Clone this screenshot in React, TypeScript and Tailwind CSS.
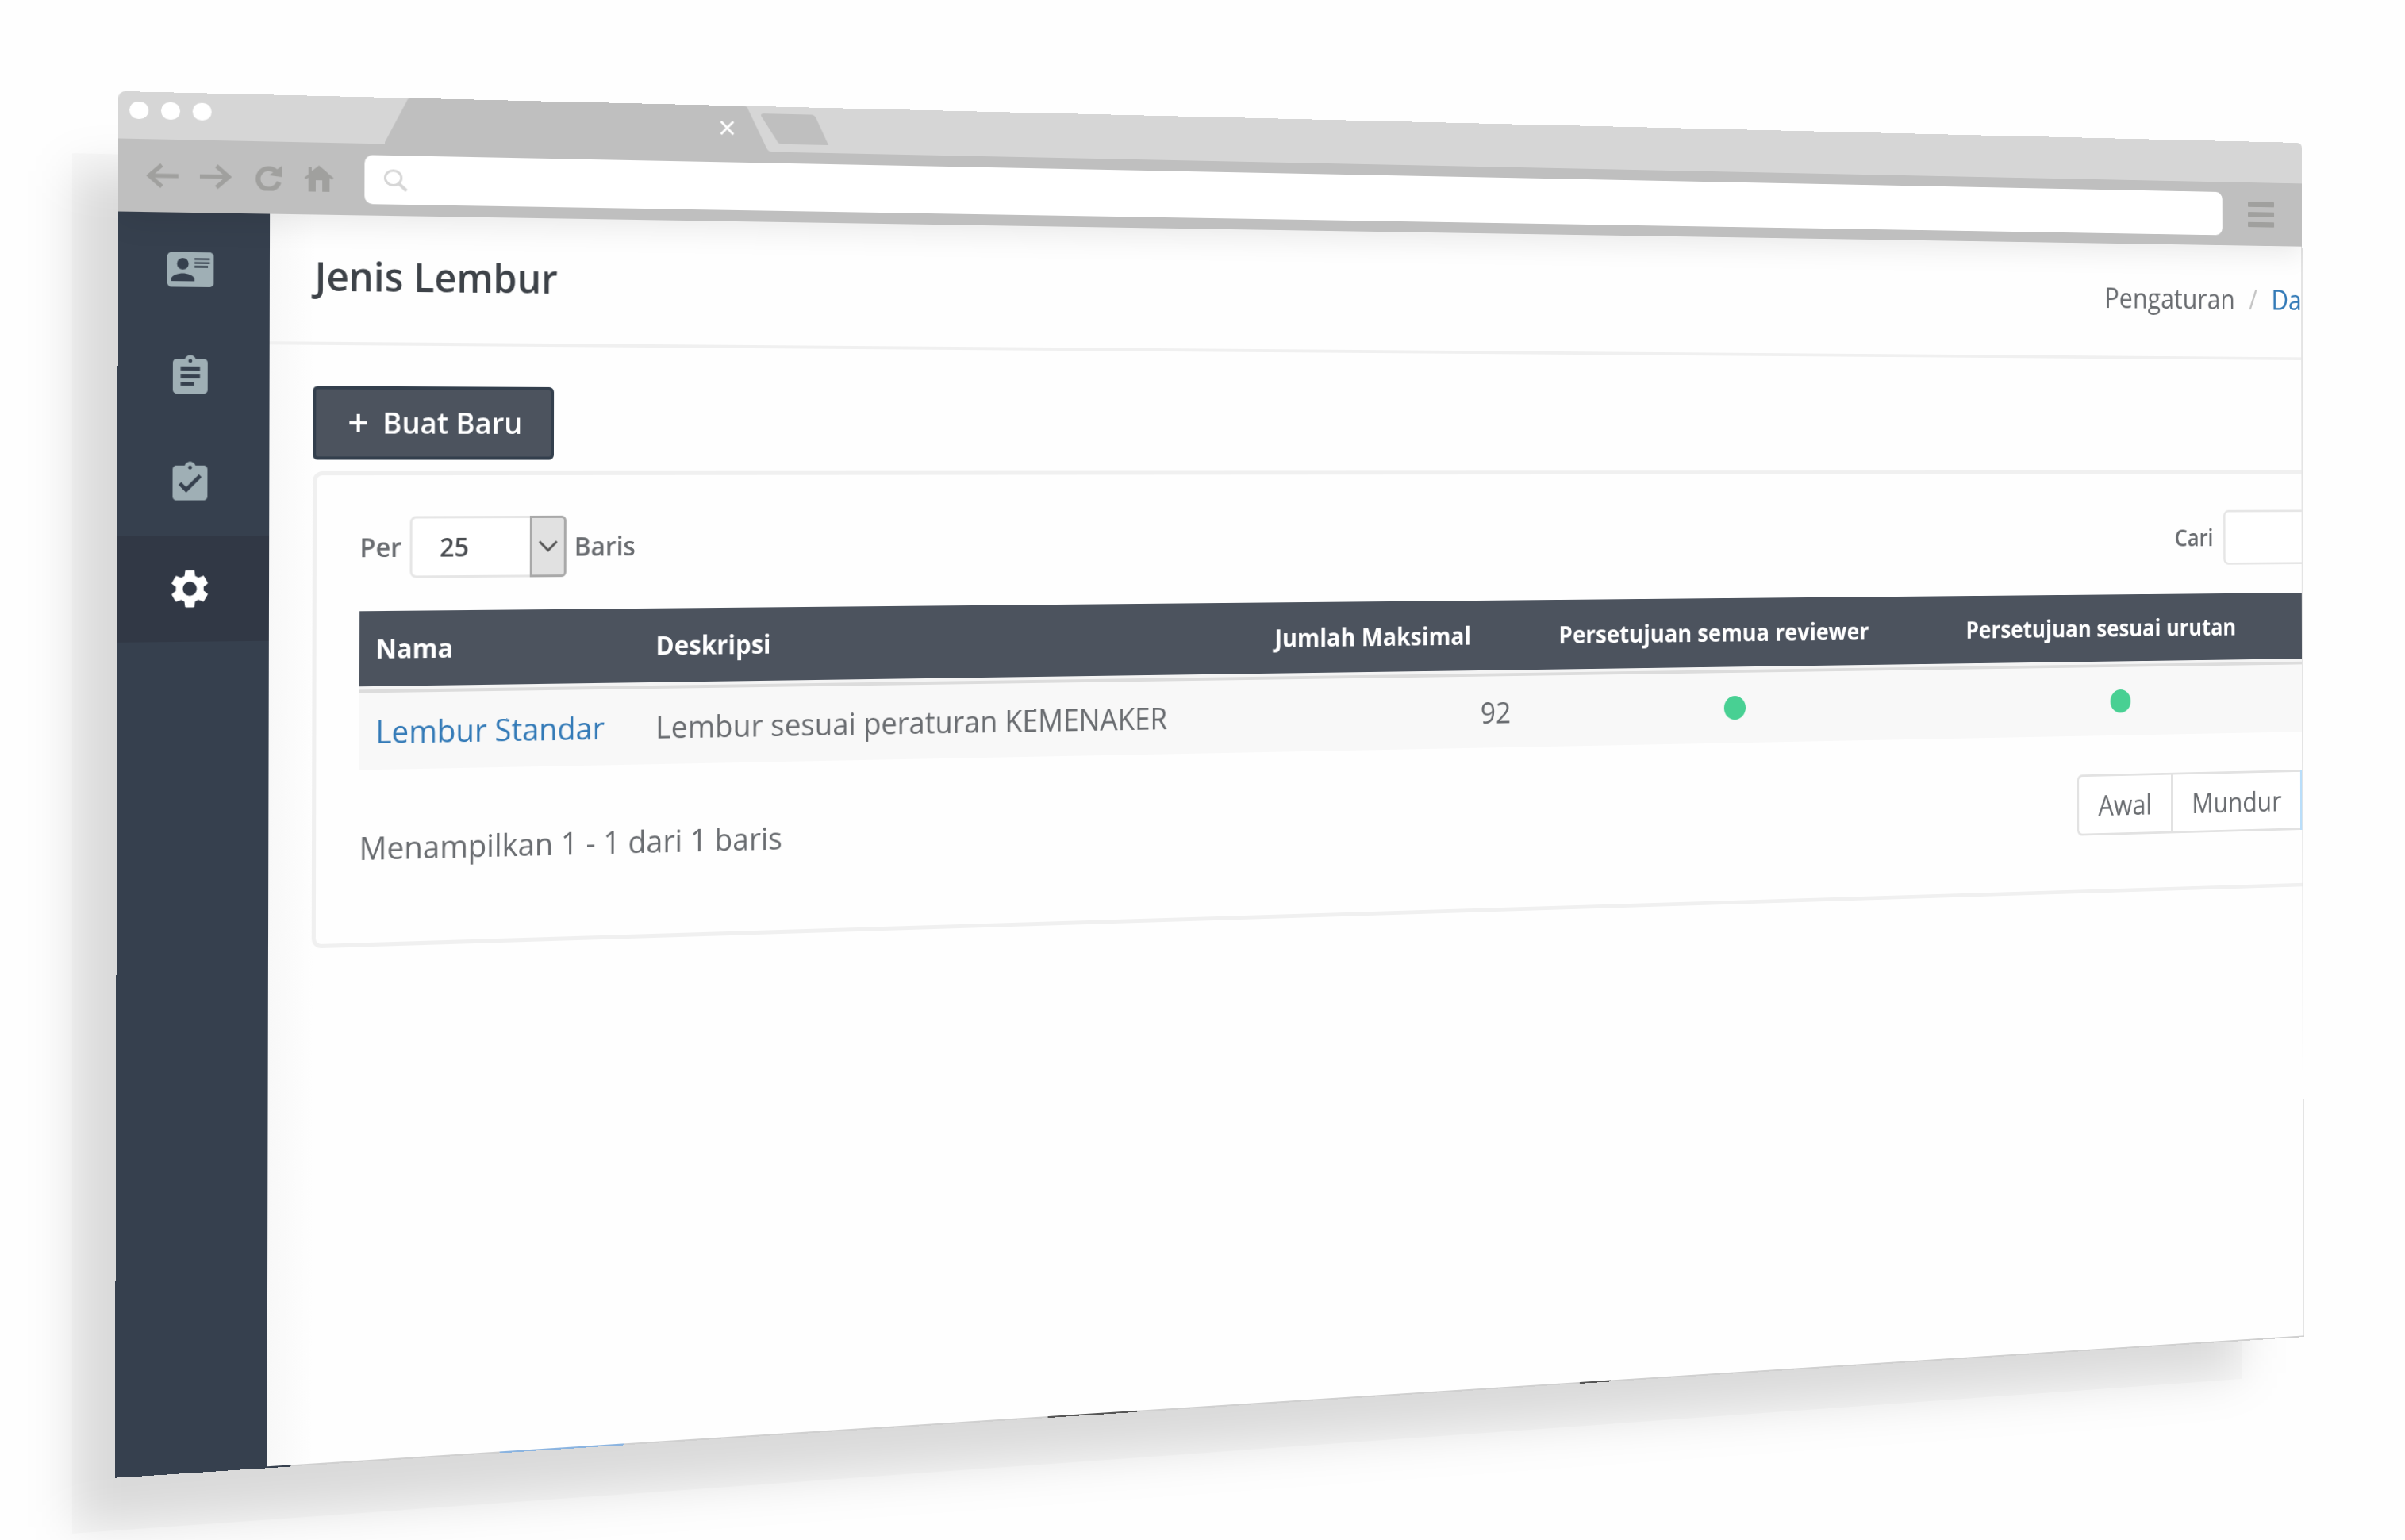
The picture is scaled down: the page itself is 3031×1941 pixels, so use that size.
import { useLayoutEffect, useRef, useState } from "react";
import type { ReactNode } from "react";
import { MdAssignment, MdAssignmentTurnedIn, MdSettings } from "react-icons/md";

type Point = [number, number];

// Corners of the tilted window, as fractions of the scene's width.
const CORNERS: Point[] = [
  [0.0493, 0.0379],
  [0.957, 0.0594],
  [0.958, 0.5559],
  [0.0478, 0.6146],
];

function projection(width: number, height: number): string {
  const [[x0, y0], [x1, y1], [x2, y2], [x3, y3]] = CORNERS.map(
    ([x, y]) => [x * width, y * width] as Point,
  );
  const dx1 = x1 - x2;
  const dx2 = x3 - x2;
  const dy1 = y1 - y2;
  const dy2 = y3 - y2;
  const sx = x0 - x1 + x2 - x3;
  const sy = y0 - y1 + y2 - y3;
  const det = dx1 * dy2 - dx2 * dy1;
  const g = (sx * dy2 - dx2 * sy) / det;
  const h = (dx1 * sy - sx * dy1) / det;
  const a = (x1 - x0 + g * x1) / width;
  const b = (x3 - x0 + h * x3) / height;
  const d = (y1 - y0 + g * y1) / width;
  const e = (y3 - y0 + h * y3) / height;
  const m = [a, d, 0, g / width, b, e, 0, h / height, 0, 0, 1, 0, x0, y0, 0, 1];
  return `matrix3d(${m.map((n) => n.toFixed(10)).join(",")})`;
}

function Tilted({ children }: { children: ReactNode }) {
  const ref = useRef<HTMLDivElement>(null);
  const [transform, setTransform] = useState("none");

  useLayoutEffect(() => {
    const el = ref.current;
    if (!el) return;
    const update = () => setTransform(projection(el.offsetWidth, el.offsetHeight));
    update();
    const observer = new ResizeObserver(update);
    observer.observe(el);
    return () => observer.disconnect();
  }, []);

  return (
    <div
      ref={ref}
      className="relative flex aspect-[20/11] w-full origin-top-left flex-col overflow-hidden rounded-t-lg bg-white"
      style={{ transform }}
    >
      {children}
    </div>
  );
}

function Shadow() {
  return (
    <svg className="absolute inset-x-0 top-0 w-full" viewBox="0 0 3031 1941" aria-hidden="true">
      <defs>
        <filter id="soft" x="-10%" y="-10%" width="120%" height="120%">
          <feGaussianBlur stdDeviation="30" />
        </filter>
      </defs>
      <polygon points="94,215 2822,260 2822,1730 94,1926" fill="#000" fillOpacity="0.125" filter="url(#soft)" />
      <polygon points="91,193 2826,260 2826,1738 91,1933" fill="#000" fillOpacity="0.02" />
    </svg>
  );
}

function TabStrip() {
  return (
    <div className="relative z-20 h-[57px] bg-[#d6d6d6]">
      <div className="flex h-full">
        <div className="flex w-[324px] gap-[15px] pt-3 pl-[13px]">
          <span className="h-[21px] w-[23px] rounded-full bg-white" />
          <span className="h-[21px] w-[23px] rounded-full bg-white" />
          <span className="h-[21px] w-[23px] rounded-full bg-white" />
        </div>
        <svg className="h-[57px] w-[570px]" viewBox="0 0 570 57" aria-hidden="true">
          <path d="M-6 57 Q0 57 2 51 L27 4 Q28 0 32 0 H454 Q459 0 460 4 L484 52 Q486 57 492 57 Z" fill="#bfbfbf" />
          <path d="M481 9 H542 Q547 9 549 14 L565 47 H504 Q499 47 497 42 L477 12 Q476 9 481 9 Z" fill="#bfbfbf" />
          <path d="M425 20 L441 36 M441 20 L425 36" stroke="#fff" strokeWidth="3" />
        </svg>
      </div>
    </div>
  );
}

function Toolbar() {
  return (
    <div className="relative z-10 flex h-[88px] items-center bg-[#bfbfbf] pl-[33px] text-[#a0a09e] shadow-[0_8px_40px_rgba(0,0,0,0.09)]">
      <div className="flex w-[266px] items-center gap-[26px]">
        <button type="button" aria-label="Back">
          <svg className="h-[30px] w-[39px]" viewBox="0 0 39 30" fill="none" stroke="currentColor" strokeWidth="5">
            <path d="M39 15 H4 M19 2 L4 15 L19 28" />
          </svg>
        </button>
        <button type="button" aria-label="Forward">
          <svg className="h-[30px] w-[39px]" viewBox="0 0 39 30" fill="none" stroke="currentColor" strokeWidth="5">
            <path d="M0 15 H35 M20 2 L35 15 L20 28" />
          </svg>
        </button>
        <button type="button" aria-label="Reload">
          <svg className="h-[31px] w-[36px]" viewBox="0 0 36 31">
            <path d="M27 7 A13 12.5 0 1 0 31 20" fill="none" stroke="currentColor" strokeWidth="6" />
            <path d="M35 0 V14 L19 12 Z" fill="currentColor" />
          </svg>
        </button>
        <button type="button" aria-label="Home">
          <svg className="h-[32px] w-[36px]" viewBox="0 0 36 32" fill="currentColor">
            <path d="M18 0 L36 15 L34 17 L31 15 V32 H22 V18 H14 V32 H5 V15 L2 17 L0 15 L5 11 V2 H9 V7 Z" />
          </svg>
        </button>
      </div>
      <label className="flex h-[60px] flex-1 items-center gap-4 rounded-[10px] bg-white pl-6">
        <svg className="h-[27px] w-[30px] text-[#d6d6d6]" viewBox="0 0 30 27" fill="none" stroke="currentColor" strokeWidth="3">
          <ellipse cx="11.500" cy="10.500" rx="10" ry="9" />
          <path d="M18 17 L28 26" strokeWidth="4" />
        </svg>
        <input type="text" aria-label="Address" className="h-full flex-1 outline-none" />
      </label>
      <button type="button" aria-label="Menu" className="mr-[45px] ml-[41px] flex w-[42px] flex-col gap-[7px]">
        <span className="h-[7px] w-full rounded-[1px] bg-[#a0a09e]" />
        <span className="h-[7px] w-full rounded-[1px] bg-[#a0a09e]" />
        <span className="h-[7px] w-full rounded-[1px] bg-[#a0a09e]" />
      </button>
    </div>
  );
}

function CardIcon() {
  return (
    <svg className="size-14" viewBox="0 0 24 24" fill="currentColor">
      <path d="M2,3H22C23.05,3 24,3.95 24,5V19C24,20.05 23.05,21 22,21H2C0.95,21 0,20.05 0,19V5C0,3.95 0.95,3 2,3M14,6V7H22V6H14M14,8V9H21.5L22,9V8H14M14,10V11H21V10H14M8,13.91C6,13.91 2,15 2,17V18H14V17C14,15 10,13.91 8,13.91M8,6A3,3 0 0,0 5,9A3,3 0 0,0 8,12A3,3 0 0,0 11,9A3,3 0 0,0 8,6Z" />
    </svg>
  );
}

const ITEM = "flex h-[129px] w-full items-center justify-center pr-2.5";

function Sidebar() {
  return (
    <nav className="flex w-[183px] shrink-0 flex-col bg-[#36404e] pt-1 text-[#9fafb5]">
      <a href="#karyawan" aria-label="Karyawan" className={ITEM}>
        <CardIcon />
      </a>
      <a href="#laporan" aria-label="Laporan" className={ITEM}>
        <MdAssignment className="size-14" />
      </a>
      <a href="#persetujuan" aria-label="Persetujuan" className={ITEM}>
        <MdAssignmentTurnedIn className="size-14" />
      </a>
      <a href="#pengaturan" aria-label="Pengaturan" className="flex h-32 w-full items-center justify-center bg-[#313845] pr-2.5 text-white">
        <MdSettings className="size-14" />
      </a>
    </nav>
  );
}

function OvertimeTable() {
  return (
    <table className="mt-10 w-[2784px] table-fixed border-separate border-spacing-0 text-left">
      <colgroup>
        <col className="w-[352px]" />
        <col className="w-[825px]" />
        <col className="w-[375px]" />
        <col className="w-[614px]" />
        <col className="w-[562px]" />
        <col />
      </colgroup>
      <thead>
        <tr className="h-24 bg-[#4c535e] text-[32px] whitespace-nowrap text-white [&>th]:border-b-4 [&>th]:border-[#f4f4f4]">
          <th className="px-5 font-bold">Nama</th>
          <th className="px-5 font-bold">Deskripsi</th>
          <th className="pr-[77px] text-right font-bold">Jumlah Maksimal</th>
          <th className="pr-[77px] pl-5 text-center font-bold">Persetujuan semua reviewer</th>
          <th className="pr-[77px] pl-5 text-center font-bold">Persetujuan sesuai urutan</th>
          <th />
        </tr>
      </thead>
      <tbody>
        <tr className="h-[98px] bg-[#f8f8f8] text-[38px] [&>td]:border-t-4 [&>td]:border-[#dcdcdc]">
          <td className="px-5">
            <a href="#lembur-standar" className="text-[#337ab7]">
              Lembur Standar
            </a>
          </td>
          <td className="px-5">Lembur sesuai peraturan KEMENAKER</td>
          <td className="px-5 text-right">92</td>
          <td>
            <span role="img" aria-label="Ya" className="mx-auto block size-8 rounded-full bg-[#48d093]" />
          </td>
          <td>
            <span role="img" aria-label="Ya" className="mx-auto block size-8 rounded-full bg-[#48d093]" />
          </td>
          <td />
        </tr>
      </tbody>
    </table>
  );
}

function Page() {
  return (
    <main className="min-w-0 flex-1 overflow-hidden bg-[linear-gradient(to_right,#f8f8f8,#fefefe_56px)] text-[#696c70]">
      <header className="flex h-[159px] items-center justify-between border-b-4 border-[#f0f0f0] pb-1.5 pl-[55px]">
        <h1 className="text-[48px] font-semibold text-[#3d4248]">Jenis Lembur</h1>
        <nav className="flex gap-[22px] text-[38px] whitespace-nowrap">
          <span>Pengaturan</span>
          <span className="text-[#c4c4c4]">/</span>
          <a href="#dasar" className="w-[48px] text-[#337ab7]">
            Da
          </a>
        </nav>
      </header>
      <div className="-mr-10 pt-[50px] pl-[53px]">
        <button
          type="button"
          className="flex h-[90px] items-center gap-[18px] rounded-md border-4 border-[#333f4d] bg-[#4c535e] pr-9 pl-10 text-[36px] font-semibold text-white"
        >
          <svg className="size-6" viewBox="0 0 24 24" stroke="currentColor" strokeWidth="4" aria-hidden="true">
            <path d="M12 1 V23 M1 12 H23" />
          </svg>
          Buat Baru
        </button>
        <section className="mt-3.5 rounded-[12px] border-5 border-[#f0f0f0] bg-[#fefefe] pt-[50px] pb-[74px] pl-[53px]">
          <div className="flex items-center justify-between text-[32px] font-semibold">
            <div className="flex items-center gap-[10px]">
              <label htmlFor="per">Per</label>
              <span className="relative flex">
                <select
                  id="per"
                  defaultValue="25"
                  className="h-[76px] w-[196px] appearance-none rounded-lg border-[3px] border-[#e6e6e6] bg-white pl-[34px] text-[#4a4d51]"
                >
                  <option>25</option>
                </select>
                <span className="pointer-events-none absolute inset-y-0 right-0 flex w-[46px] items-center justify-center rounded-r-md border-[3px] border-[#a9a9a9] bg-[#e1e1e1]">
                  <svg className="h-4 w-6" viewBox="0 0 24 16" fill="none" stroke="#555" strokeWidth="3" aria-hidden="true">
                    <path d="M1 2 L12 13 L23 2" />
                  </svg>
                </span>
              </span>
              <label htmlFor="per">Baris</label>
            </div>
            <div className="flex items-center gap-4">
              <label htmlFor="cari">Cari</label>
              <input id="cari" type="text" className="h-[76px] w-[160px] rounded-lg border-[3px] border-[#e6e6e6] bg-white" />
            </div>
          </div>
          <OvertimeTable />
          <div className="mt-[53px] flex items-center justify-between text-[38px]">
            <p>Menampilkan 1 - 1 dari 1 baris</p>
            <div className="flex h-[84px] w-[391px]">
              <button type="button" className="w-[150px] rounded-l-lg border-[3px] border-[#e2e2e2] bg-white">
                Awal
              </button>
              <button type="button" className="w-[203px] border-y-[3px] border-[#e2e2e2] bg-white">
                Mundur
              </button>
              <button type="button" aria-label="1" className="flex-1 border-[3px] border-[#b9defa] bg-white" />
            </div>
          </div>
        </section>
      </div>
    </main>
  );
}

export default function App() {
  return (
    <div className="relative min-h-screen w-full overflow-hidden bg-[#fefefe] font-['Open_Sans',sans-serif]">
      <Shadow />
      <Tilted>
        <TabStrip />
        <Toolbar />
        <div className="flex flex-1 border-r-2 border-[#e4e4e4]">
          <Sidebar />
          <Page />
        </div>
        <div className="absolute inset-x-0 bottom-0 h-0.5 bg-[linear-gradient(to_right,#36404e_7%,#d0d0d0_7%_15.5%,#8bb4e0_15.5%_20.7%,#d0d0d0_20.7%_39%,#555_39%_43%,#d0d0d0_43%_63.5%,#555_63.5%_65%,#d0d0d0_65%)]" />
      </Tilted>
    </div>
  );
}
